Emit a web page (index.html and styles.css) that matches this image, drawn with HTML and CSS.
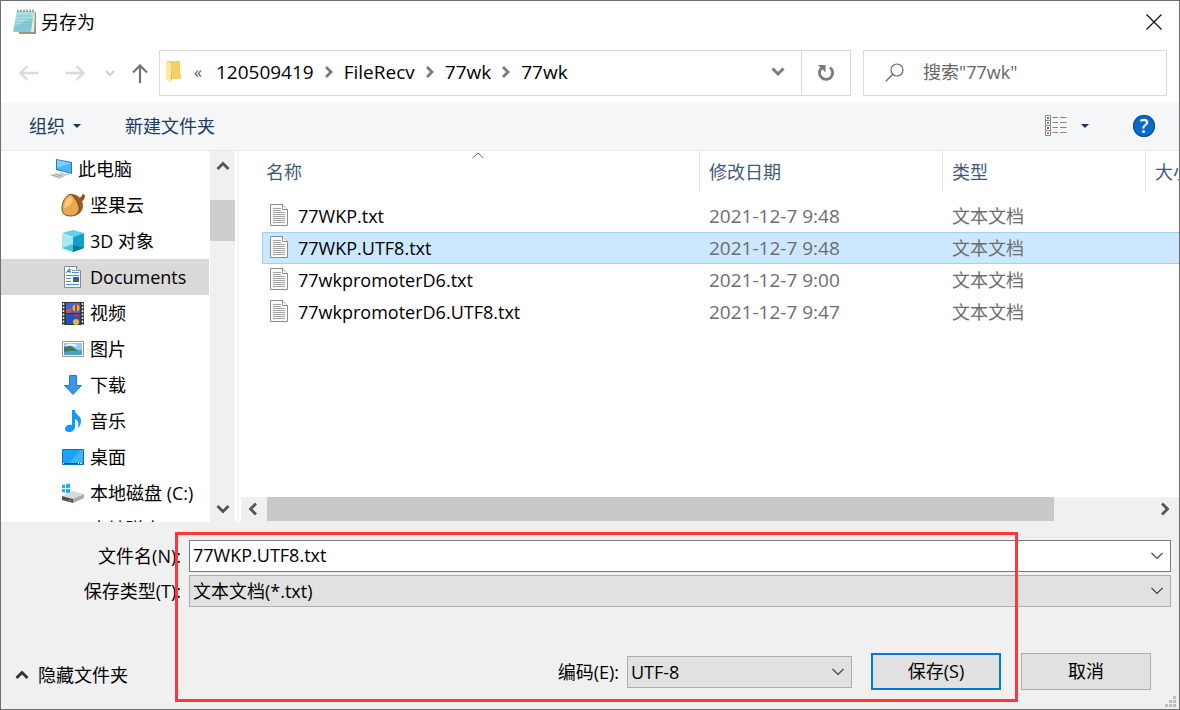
FILE: index.html
```html
<!DOCTYPE html>
<html lang="zh-CN">
<head>
    <meta charset="UTF-8">
    <meta name="viewport" content="width=device-width, initial-scale=1.0">
    <title>另存为</title>
    <link rel="stylesheet" href="styles.css">
</head>
<body>
    <svg class="defs" width="0" height="0">
        <symbol id="file-icon" viewBox="0 0 18 22">
            <path d="M.5.5h12l5 5v16H.5z" fill="#f9f9f9" stroke="#8c8c8c"/>
            <path d="M12.500.5v5h5" fill="#fff" stroke="#8c8c8c"/>
            <path d="M3 4.500h8M3 6.500h8M3 8.500h12M3 10.500h12M3 12.500h12M3 14.500h12M3 16.500h12M3 18.500h12" stroke="#a4a4a4"/>
        </symbol>
        <symbol id="crumb-arrow" viewBox="0 0 8 12">
            <path d="M1 1 6 6l-5 5" fill="none" stroke="#7a7a7a" stroke-width="2.800"/>
        </symbol>
    </svg>

    <form class="dialog">
        <header class="title-bar">
            <svg class="app-icon" width="24" height="26" viewBox="0 0 24 26">
                <path d="M5 3h18v22H6z" fill="#a3937a"/>
                <path d="M5 2h17l-1 21H5z" fill="#f1ead8"/>
                <path d="M4 2h17l-3 21H0z" fill="#84cbd5"/>
                <path d="M4 2h17l-1 7L2 17z" fill="#a9e0e6"/>
                <path d="M4 7h15M3.500 10h15M3 13h15M2.500 16h15M2 19h15" stroke="#74bcc8" stroke-width=".7"/>
                <path d="M5 3V.500M8 3V.500M11 3V.500M14 3V.500M17 3V.500M20 3V.500" stroke="#58696d"/>
            </svg>
            <h1>另存为</h1>
            <button type="button" class="close" aria-label="关闭">
                <svg width="16" height="16" viewBox="0 0 16 16"><path d="m.500.5 15 15m0-15-15 15" stroke="#111" stroke-width="1.200"/></svg>
            </button>
        </header>

        <nav class="nav-bar">
            <div class="nav-buttons">
                <button type="button" aria-label="后退"><svg width="20" height="16" viewBox="0 0 20 16"><path d="M19.500 8H2M8.500 1 1.500 8l7 7" fill="none" stroke="#d9d9d9" stroke-width="2.400"/></svg></button>
                <button type="button" aria-label="前进"><svg width="20" height="16" viewBox="0 0 20 16"><path d="M.500 8H18M11.500 1l7 7-7 7" fill="none" stroke="#d9d9d9" stroke-width="2.400"/></svg></button>
                <button type="button" class="recent" aria-label="最近浏览的位置"><svg width="10" height="7" viewBox="0 0 10 7"><path d="m1 1 4 4 4-4" fill="none" stroke="#d0d0d0" stroke-width="2"/></svg></button>
                <button type="button" class="up" aria-label="上移"><svg width="16" height="19" viewBox="0 0 16 19"><path d="M8 19V2M1 8.500l7-7 7 7" fill="none" stroke="#737373" stroke-width="2.200"/></svg></button>
            </div>
            <div class="address">
                <svg width="15" height="22" viewBox="0 0 15 22">
                    <path d="M1 0h13v12l1 1v5H5z" fill="#f7cf63"/>
                    <path d="M0 0 5 3v19l-5-4z" fill="#fce7a4"/>
                    <path d="m5 3 1 15-1 3z" fill="#e8b94c"/>
                </svg>
                <span class="more">«</span>
                <span>120509419</span>
                <svg width="8" height="12"><use href="#crumb-arrow"/></svg>
                <span>FileRecv</span>
                <svg width="8" height="12"><use href="#crumb-arrow"/></svg>
                <span>77wk</span>
                <svg width="8" height="12"><use href="#crumb-arrow"/></svg>
                <span>77wk</span>
                <button type="button" class="history" aria-label="以前的位置"><svg width="14" height="10" viewBox="0 0 14 10"><path d="m1.500 1.500 5.500 5.500 5.500-5.500" fill="none" stroke="#7a7a7a" stroke-width="3"/></svg></button>
                <button type="button" class="refresh" aria-label="刷新">
                    <svg width="18" height="18" viewBox="0 0 18 18">
                        <path d="M13 3.500a6.600 6.600 0 1 1-8.500.5" fill="none" stroke="#7a7a7a" stroke-width="2.800"/>
                        <path d="M1 1h7.500v7.500z" fill="#7a7a7a"/>
                    </svg>
                </button>
            </div>
            <label class="search">
                <svg width="19" height="19" viewBox="0 0 19 19"><circle cx="12" cy="7" r="6" fill="none" stroke="#6b6b6b" stroke-width="1.200"/><path d="m7.800 11.200-7 7" stroke="#6b6b6b" stroke-width="1.400"/></svg>
                <input type="text" placeholder='搜索"77wk"' aria-label="搜索">
            </label>
        </nav>

        <div class="toolbar">
            <button type="button" class="organize">组织 <i class="caret"></i></button>
            <button type="button">新建文件夹</button>
            <button type="button" class="view" aria-label="更改视图">
                <svg width="22" height="21" viewBox="0 0 22 21">
                    <path d="M.500.5h5v20h-5zM.500 5.500h5M.500 10.500h5M.500 15.500h5" fill="#fff" stroke="#8a8a8a"/>
                    <path d="M7.500 2.500H13M15 2.500h6.500M7.500 7.500H13M15 7.500h6.500M7.500 12.500H13M15 12.500h6.500M7.500 17.500H13M15 17.500h6.500" stroke="#858585"/>
                    <path d="M2 2h2v2H2z" fill="#3e8e85"/><path d="M2 7h2v2H2z" fill="#7b8a56"/><path d="M2 12h2v2H2z" fill="#c3372b"/><path d="M2 17h2v2H2z" fill="#a59850"/>
                </svg>
                <i class="caret"></i>
            </button>
            <button type="button" class="help" aria-label="帮助">?</button>
        </div>

        <main class="browser">
            <ul class="tree">
                <li class="root">
                    <svg width="24" height="22" viewBox="0 0 24 22">
                        <path d="m7 1 16 3v12L7 12z" fill="#2a76b8"/><path d="m8 2 14 3v10L8 11z" fill="#4db5fb"/><path d="m8 2 14 3-14 5z" fill="#7fd0ff"/>
                        <path d="m11 14 5 2 4-1v2l-6 1-4-2z" fill="#c3c9cd"/><path d="m0 17 8-2 8 3-5 3z" fill="#d5d8da"/><path d="m3 17 8 2.500M6 16l8 2.500" stroke="#8f979c" stroke-width=".8"/>
                    </svg>
                    此电脑
                </li>
                <li>
                    <svg width="24" height="24" viewBox="0 0 24 24">
                        <path d="M17 5q5-1 4-4l3 1q0 5-4 7z" fill="#8c4d20"/>
                        <path d="M9 1C16 0 22 6 22 13c0 5-4 9-9 10z" fill="#9c5922"/>
                        <path d="M10 1C4 3 1 9 1 15c0 6 3 8 9 8 5 0 9-4 8-9C17 9 14 5 10 1z" fill="#e6ab52" stroke="#80491f"/>
                        <path d="M9 3c-4 3-6 8-6 12 5-1 9-5 9-9z" fill="#f6cb79"/>
                    </svg>
                    坚果云
                </li>
                <li>
                    <svg width="24" height="22" viewBox="0 0 24 22">
                        <path d="m1 3 11-3 11 3-11 4z" fill="#5ed3e8"/><path d="m1 3 11 4v15L1 18z" fill="#a8eaf3"/><path d="M23 3 12 7v15l11-4z" fill="#129fd0"/><path d="m12 15 11 3-11 4z" fill="#08799e"/><path d="m1 18 11-4v8z" fill="#45c7d5"/>
                    </svg>
                    3D 对象
                </li>
                <li class="current">
                    <svg width="24" height="22" viewBox="0 0 24 22">
                        <path d="M3.500.5h12l4 4v17h-16z" fill="#fff" stroke="#858b90"/><path d="M15.500.5v4h4" fill="#e5e9ec" stroke="#858b90"/>
                        <path d="m5.500 7 2.500-4h1v4M6.500 5.500H9" stroke="#1677c8" fill="none"/><path d="M11 4.500h3M11 6.500h7M5 9.500h13M5 12.500h5M5 15.500h5M5 18.500h13" stroke="#4895ca"/><path d="M12 11h6v5h-6z" fill="#2d6793"/>
                    </svg>
                    Documents
                </li>
                <li>
                    <svg width="24" height="23" viewBox="0 0 24 23">
                        <path d="M1 0h22v23H1z" fill="#343434"/><path d="M5 1h14v10H5z" fill="#3667dc"/><path d="M5 12h14v10H5z" fill="#244fbf"/>
                        <path d="M2.500 1v22M21.500 1v22" stroke="#e9e9e9" stroke-width="1.600" stroke-dasharray="2 1.500"/>
                        <circle cx="15" cy="6" r="3.500" fill="#f0b42b"/><path d="M15 2.500v7" stroke="#ce3329" stroke-width="2"/><path d="m5 8 4-2 2 3-2 2H5z" fill="#dc5137"/>
                        <path d="M13 12h5l-1 3h-3z" fill="#ce3329"/><circle cx="15" cy="20" r="3" fill="#edb63b"/>
                    </svg>
                    视频
                </li>
                <li>
                    <svg width="24" height="16" viewBox="0 0 24 16">
                        <path d="M1.500.5h21v15h-21z" fill="#fff" stroke="#9b9b9b"/><path d="M3 2h18v12H3z" fill="#92c9ee"/><path d="M3 6q5-3 10 1t8 2v2H3z" fill="#3f7864"/><path d="M3 11q9-2 18-1v4H3z" fill="#4d9fc3"/><path d="M5 5q5-3 11 0" stroke="#e7f4fc" stroke-width="2" fill="none"/>
                    </svg>
                    图片
                </li>
                <li>
                    <svg width="24" height="20" viewBox="0 0 24 20"><path d="M8.500.5h7v10h5L12 19.500 3.500 10.500h5z" fill="#3d96e4" stroke="#237bc8"/></svg>
                    下载
                </li>
                <li>
                    <svg width="24" height="22" viewBox="0 0 24 22"><path d="M11 0h3c0 5 6 5 6 11 0 4-2 6-3 7 1-5 0-8-3-9v8c0 3-3 5-6 5-2 0-4-1-4-3 0-3 3-5 7-4z" fill="#119bf4"/></svg>
                    音乐
                </li>
                <li>
                    <svg width="24" height="16" viewBox="0 0 24 16"><path d="M1.500.5h21v15h-21z" fill="#18a4fb" stroke="#1073ae"/><path d="M8 14 20 1h2v13z" fill="#3db4ff"/><path d="M2 14.500h20" stroke="#0b568b"/><path d="M2 14.500h1M17 14.500h1M19 14.500h2" stroke="#fff"/></svg>
                    桌面
                </li>
                <li>
                    <svg width="24" height="20" viewBox="0 0 24 20">
                        <path d="m1 2 3-.6V5H1zM5 1.200 9 .500V5H5zM1 6h3v3.500L1 9zM5 6h4v4.300l-4-.6z" fill="#13b4f2"/>
                        <path d="m1 13 11-5 11 3-11 5z" fill="#d9d9d9"/><path d="m1 13 11 3v4L1 17z" fill="#525252"/><path d="m12 16 11-5v4l-11 5z" fill="#aaa"/><path d="M8 17.500h2" stroke="#4bd35b"/>
                    </svg>
                    本地磁盘 (C:)
                </li>
                <li><svg width="24" height="20"></svg>本地磁盘 (D:)</li>
            </ul>
            <div class="v-scroll">
                <svg width="14" height="10" viewBox="0 0 14 10"><path d="m1.500 8 5.500-5.500L12.500 8" fill="none" stroke="#555" stroke-width="2.800"/></svg>
                <div class="v-thumb"></div>
                <svg width="14" height="10" viewBox="0 0 14 10"><path d="m1.500 2 5.500 5.500L12.500 2" fill="none" stroke="#555" stroke-width="2.800"/></svg>
            </div>

            <section class="files">
                <svg class="sort" width="12" height="7" viewBox="0 0 12 7"><path d="m.500 6 5.500-5 5.500 5" fill="none" stroke="#666"/></svg>
                <table>
                    <colgroup><col><col class="col-date"><col class="col-type"><col class="col-size"></colgroup>
                    <thead>
                        <tr><th>名称</th><th>修改日期</th><th>类型</th><th>大小</th></tr>
                    </thead>
                    <tbody>
                        <tr><td><svg width="18" height="22"><use href="#file-icon"/></svg>77WKP.txt</td><td class="date">2021-12-7 9:48</td><td>文本文档</td><td></td></tr>
                        <tr class="selected"><td><svg width="18" height="22"><use href="#file-icon"/></svg>77WKP.UTF8.txt</td><td class="date">2021-12-7 9:48</td><td>文本文档</td><td></td></tr>
                        <tr><td><svg width="18" height="22"><use href="#file-icon"/></svg>77wkpromoterD6.txt</td><td class="date">2021-12-7 9:00</td><td>文本文档</td><td></td></tr>
                        <tr><td><svg width="18" height="22"><use href="#file-icon"/></svg>77wkpromoterD6.UTF8.txt</td><td class="date">2021-12-7 9:47</td><td>文本文档</td><td></td></tr>
                    </tbody>
                </table>
                <div class="h-scroll">
                    <svg width="10" height="14" viewBox="0 0 10 14"><path d="M8 1.500 2.500 7 8 12.500" fill="none" stroke="#555" stroke-width="2.800"/></svg>
                    <div class="h-track"><div class="h-thumb"></div></div>
                    <svg width="10" height="14" viewBox="0 0 10 14"><path d="M2 1.500 7.500 7 2 12.500" fill="none" stroke="#555" stroke-width="2.800"/></svg>
                </div>
            </section>
        </main>

        <footer class="save-panel">
            <div class="field">
                <label for="file-name">文件名(N):</label>
                <div class="combo editable">
                    <input type="text" id="file-name" value="77WKP.UTF8.txt">
                    <svg width="12" height="8" viewBox="0 0 12 8"><path d="m.500 1 5.500 5.500L11.500 1" fill="none" stroke="#444" stroke-width="1.200"/></svg>
                </div>
            </div>
            <div class="field">
                <label for="file-type">保存类型(T):</label>
                <div class="combo">
                    <select id="file-type"><option>文本文档(*.txt)</option></select>
                    <svg width="12" height="8" viewBox="0 0 12 8"><path d="m.500 1 5.500 5.500L11.500 1" fill="none" stroke="#444" stroke-width="1.200"/></svg>
                </div>
            </div>
            <div class="actions">
                <button type="button" class="hide-folders">
                    <svg width="14" height="10" viewBox="0 0 14 10"><path d="m1.500 8 5.500-5.500L12.500 8" fill="none" stroke="#333" stroke-width="2.800"/></svg>
                    隐藏文件夹
                </button>
                <label for="encoding">编码(E):</label>
                <div class="combo encoding">
                    <select id="encoding"><option>UTF-8</option></select>
                    <svg width="12" height="8" viewBox="0 0 12 8"><path d="m.500 1 5.500 5.500L11.500 1" fill="none" stroke="#444" stroke-width="1.200"/></svg>
                </div>
                <button type="submit" class="btn primary">保存(S)</button>
                <button type="button" class="btn">取消</button>
            </div>
            <div class="highlight"></div>
            <svg class="grip" width="11" height="11" viewBox="0 0 11 11"><path d="M8 0h3v3H8zM4 4h3v3H4zM8 4h3v3H8zM0 8h3v3H0zM4 8h3v3H4zM8 8h3v3H8z" fill="#bdbdbd"/></svg>
        </footer>
    </form>
</body>
</html>
```
FILE: styles.css
```css
* {
    box-sizing: border-box;
}

body {
    margin: 0;
    font-family: "Open Sans", "Noto Sans CJK SC", sans-serif;
    font-size: 18px;
    line-height: 24px;
    color: #000;
}

button, input, select {
    font: inherit;
    color: inherit;
    margin: 0;
    padding: 0;
    border: none;
    background: none;
    border-radius: 0;
}

svg {
    display: block;
    flex: none;
}

.defs {
    position: absolute;
}

.dialog {
    height: 100vh;
    display: flex;
    flex-direction: column;
    overflow: hidden;
    border: 1px solid #6e6e6e;
    background-color: #fff;
}

/* title */
.title-bar {
    display: flex;
    align-items: center;
    height: 42px;
    padding: 0 17px 0 12px;
    gap: 4px;
}

.title-bar h1 {
    margin: 0;
    font-size: 18px;
    font-weight: 400;
}

.close {
    margin-left: auto;
}

/* navigation */
.nav-bar {
    display: flex;
    align-items: center;
    height: 60px;
    padding: 0 12px 0 18px;
}

.nav-buttons {
    display: flex;
    align-items: center;
    width: 140px;
    gap: 26px;
}

.recent {
    margin-left: -6px;
}

.up {
    margin-left: -9px;
}

.address {
    display: flex;
    align-items: center;
    flex: 1;
    height: 46px;
    margin-right: 12px;
    padding: 0 0 2px 6px;
    gap: 11px;
    border: 1px solid #d9d9d9;
    font-size: 19px;
}

.more {
    margin: 0 3px 0 2px;
    font-size: 16px;
    color: #555;
}

.history {
    margin-left: auto;
    margin-right: 5px;
}

.refresh {
    display: flex;
    align-items: center;
    justify-content: center;
    align-self: stretch;
    width: 49px;
    margin-bottom: -2px;
    border-left: 1px solid #d9d9d9;
}

.search {
    display: flex;
    align-items: center;
    width: 304px;
    height: 46px;
    padding: 0 0 2px 21px;
    gap: 19px;
    border: 1px solid #d9d9d9;
}

.search input {
    flex: 1;
    min-width: 0;
    outline: none;
}

.search input::placeholder {
    color: #666;
    opacity: 1;
}

/* toolbar */
.toolbar {
    display: flex;
    align-items: center;
    height: 48px;
    padding: 0 24px 2px 28px;
    background-color: #f4f6f8;
    border-bottom: 1px solid #e6e8ea;
    color: #1c3a66;
}

.organize, .view {
    display: flex;
    align-items: center;
    gap: 8px;
}

.organize {
    margin-right: 44px;
}

.caret {
    border: 4px solid transparent;
    border-top-color: #1c3a66;
    border-bottom: 0;
}

.view {
    gap: 14px;
    margin-left: auto;
    margin-right: 44px;
}

.help {
    width: 22px;
    height: 22px;
    border-radius: 50%;
    background-color: #0a68c8;
    box-shadow: inset 0 0 0 1px #104d86;
    color: #fff;
    font-size: 19px;
    font-weight: 600;
    line-height: 22px;
}

/* folder tree and file list */
.browser {
    display: flex;
    flex: 1;
    min-height: 0;
}

.tree {
    width: 209px;
    margin: 0;
    padding: 0;
    overflow: hidden;
    list-style: none;
}

.tree li {
    display: flex;
    align-items: center;
    height: 36px;
    padding-left: 60px;
    gap: 5px;
    white-space: nowrap;
}

.tree .root {
    padding-left: 48px;
}

.tree .current {
    width: 208px;
    background-color: #d9d9d9;
}

.v-scroll {
    display: flex;
    flex-direction: column;
    align-items: center;
    width: 25px;
    padding: 10px 0 8px;
    background-color: #f0f0f0;
}

.v-thumb {
    width: 100%;
    height: 41px;
    margin: 29px 0 auto;
    background-color: #cdcdcd;
}

.files {
    position: relative;
    display: flex;
    flex: 1;
    flex-direction: column;
    min-width: 0;
    margin-left: 2px;
    border-left: 2px solid #f4f4f4;
    overflow: hidden;
}

.sort {
    position: absolute;
    top: 1px;
    left: 233px;
}

.files table {
    width: 100%;
    table-layout: fixed;
    border-collapse: separate;
    border-spacing: 0;
    padding-left: 23px;
}

.col-date {
    width: 243px;
}

.col-type {
    width: 203px;
}

.col-size {
    width: 34px;
}

.files th {
    height: 41px;
    padding: 0 0 0 9px;
    border-left: 1px solid #e5e5e5;
    font-weight: 400;
    text-align: left;
    white-space: nowrap;
    overflow: hidden;
    color: #43597a;
}

.files th:first-child {
    padding-left: 4px;
    border-left: none;
}

.files tbody::before {
    content: "";
    display: block;
    height: 8px;
}

.files td {
    height: 32px;
    padding: 0 0 0 10px;
    border: solid transparent;
    border-width: 1px 0;
    line-height: 24px;
    white-space: nowrap;
    color: #6d6d6d;
}

.files td:first-child {
    padding-left: 8px;
    color: #000;
}

.files td svg {
    display: inline-block;
    margin-right: 10px;
    vertical-align: top;
}

.files .date {
    font-size: 19px;
}

.files .selected td {
    background-color: #cce8ff;
    border-color: #99d1ff;
}

.files .selected td:first-child {
    border-left: 1px solid #99d1ff;
    padding-left: 7px;
}

.h-scroll {
    display: flex;
    align-items: center;
    height: 25px;
    margin-top: auto;
    margin-left: 2px;
    padding: 0 9px 1px 7px;
    gap: 9px;
    background-color: #f0f0f0;
}

.h-track {
    flex: 1;
    height: 24px;
}

.h-thumb {
    width: 89%;
    height: 24px;
    background-color: #c9c9c9;
}

/* file name, type and buttons */
.save-panel {
    position: relative;
    display: flex;
    flex-direction: column;
    height: 187px;
    padding: 18px 8px 0 0;
    gap: 3px;
    background-color: #f0f0f0;
}

.field {
    display: flex;
    align-items: center;
    gap: 8px;
}

.field label {
    width: 180px;
    text-align: right;
}

.combo {
    position: relative;
    flex: 1;
    height: 32px;
    border: 1px solid #adadad;
    background-color: #e1e1e1;
}

.combo input, .combo select {
    display: block;
    width: 100%;
    height: 30px;
    padding: 0 30px 0 3px;
    outline: none;
    appearance: none;
}

.combo input {
    padding-bottom: 2px;
}

.combo svg {
    position: absolute;
    top: 11px;
    right: 7px;
    pointer-events: none;
}

.editable {
    border-color: #7a7a7a;
    background-color: #fff;
}

.actions {
    display: flex;
    align-items: center;
    margin-top: 43px;
    padding-right: 20px;
}

.hide-folders {
    display: flex;
    align-items: center;
    gap: 9px;
    margin-right: auto;
    margin-top: 6px;
    padding-left: 14px;
}

.encoding {
    flex: none;
    width: 225px;
    margin-left: 8px;
    margin-right: 19px;
}

.btn {
    width: 130px;
    height: 37px;
    padding-bottom: 2px;
    border: 1px solid #adadad;
    background-color: #e1e1e1;
}

.primary {
    margin-right: 20px;
    border: 2px solid #0078d7;
}

.highlight {
    position: absolute;
    top: 10px;
    bottom: 7px;
    left: 174px;
    right: 161px;
    border: 3px solid #fe3838;
    pointer-events: none;
}

.grip {
    position: absolute;
    right: 3px;
    bottom: 2px;
}
```
